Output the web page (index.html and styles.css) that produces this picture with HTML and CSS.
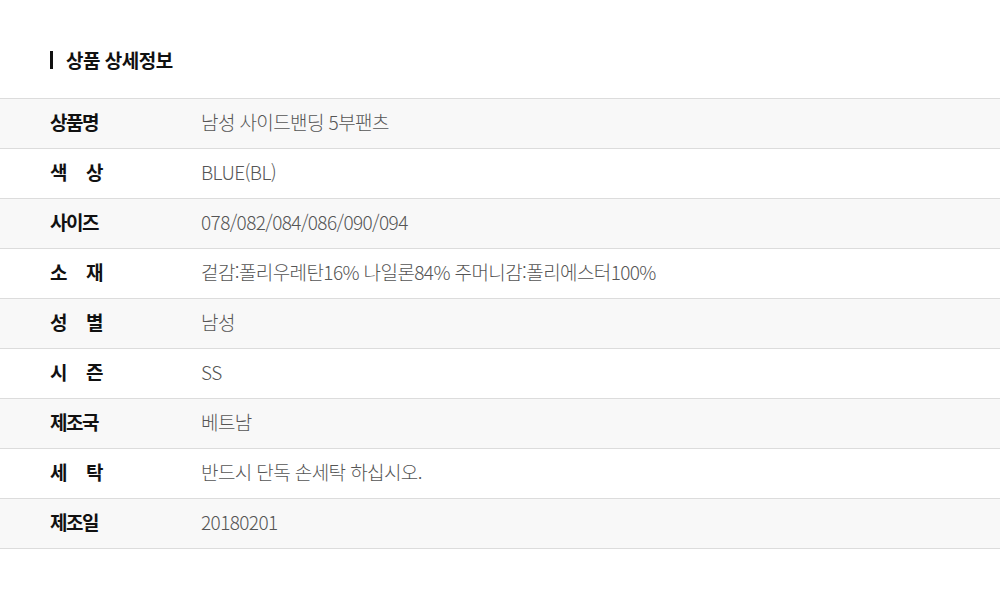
FILE: index.html
```html
<!DOCTYPE html>
<html lang="ko">
<head>
<meta charset="utf-8">
<link rel="stylesheet" href="styles.css">
</head>
<body>
<div class="page">
  <h2 class="title">상품 상세정보</h2>
  <div class="table">
    <div class="row alt"><div class="label">상품명</div><div class="value">남성 사이드밴딩 5부팬츠</div></div>
    <div class="row"><div class="label">색 상</div><div class="value">BLUE(BL)</div></div>
    <div class="row alt"><div class="label">사이즈</div><div class="value">078/082/084/086/090/094</div></div>
    <div class="row"><div class="label">소 재</div><div class="value">겉감:폴리우레탄16% 나일론84% 주머니감:폴리에스터100%</div></div>
    <div class="row alt"><div class="label">성 별</div><div class="value">남성</div></div>
    <div class="row"><div class="label">시 즌</div><div class="value">SS</div></div>
    <div class="row alt"><div class="label">제조국</div><div class="value">베트남</div></div>
    <div class="row"><div class="label">세 탁</div><div class="value">반드시 단독 손세탁 하십시오.</div></div>
    <div class="row alt"><div class="label">제조일</div><div class="value">20180201</div></div>
  </div>
</div>
</body>
</html>
```
FILE: styles.css
```css
html, body {
  margin: 0;
  padding: 0;
  background: #fff;
}
body {
  font-family: "Noto Sans CJK KR", "Noto Sans", sans-serif;
  color: #111;
}
.page {
  padding-top: 51px;
}
.title {
  margin: 0 0 0 50px;
  border-left: 3px solid #111;
  padding-left: 13px;
  font-size: 19px;
  font-weight: 700;
  letter-spacing: -0.5px;
  line-height: 18px;
  height: 18px;
  display: flex;
  align-items: center;
}
.table {
  margin-top: 29px;
  border-top: 1px solid #dcdcdc;
}
.row {
  display: flex;
  align-items: center;
  height: 49px;
  box-sizing: border-box;
  height: 50px;
  padding-bottom: 4px;
  border-bottom: 1px solid #dcdcdc;
}
.row.alt {
  background: #f8f8f8;
}
.label {
  margin-left: 50px;
  width: 52px;
  font-size: 19px;
  font-weight: 700;
  letter-spacing: -1.5px;
  text-align: justify;
  text-align-last: justify;
  color: #111;
}
.value {
  margin-left: 99px;
  font-size: 19px;
  font-weight: 300;
  color: #555;
  letter-spacing: -0.6px;
}
```
